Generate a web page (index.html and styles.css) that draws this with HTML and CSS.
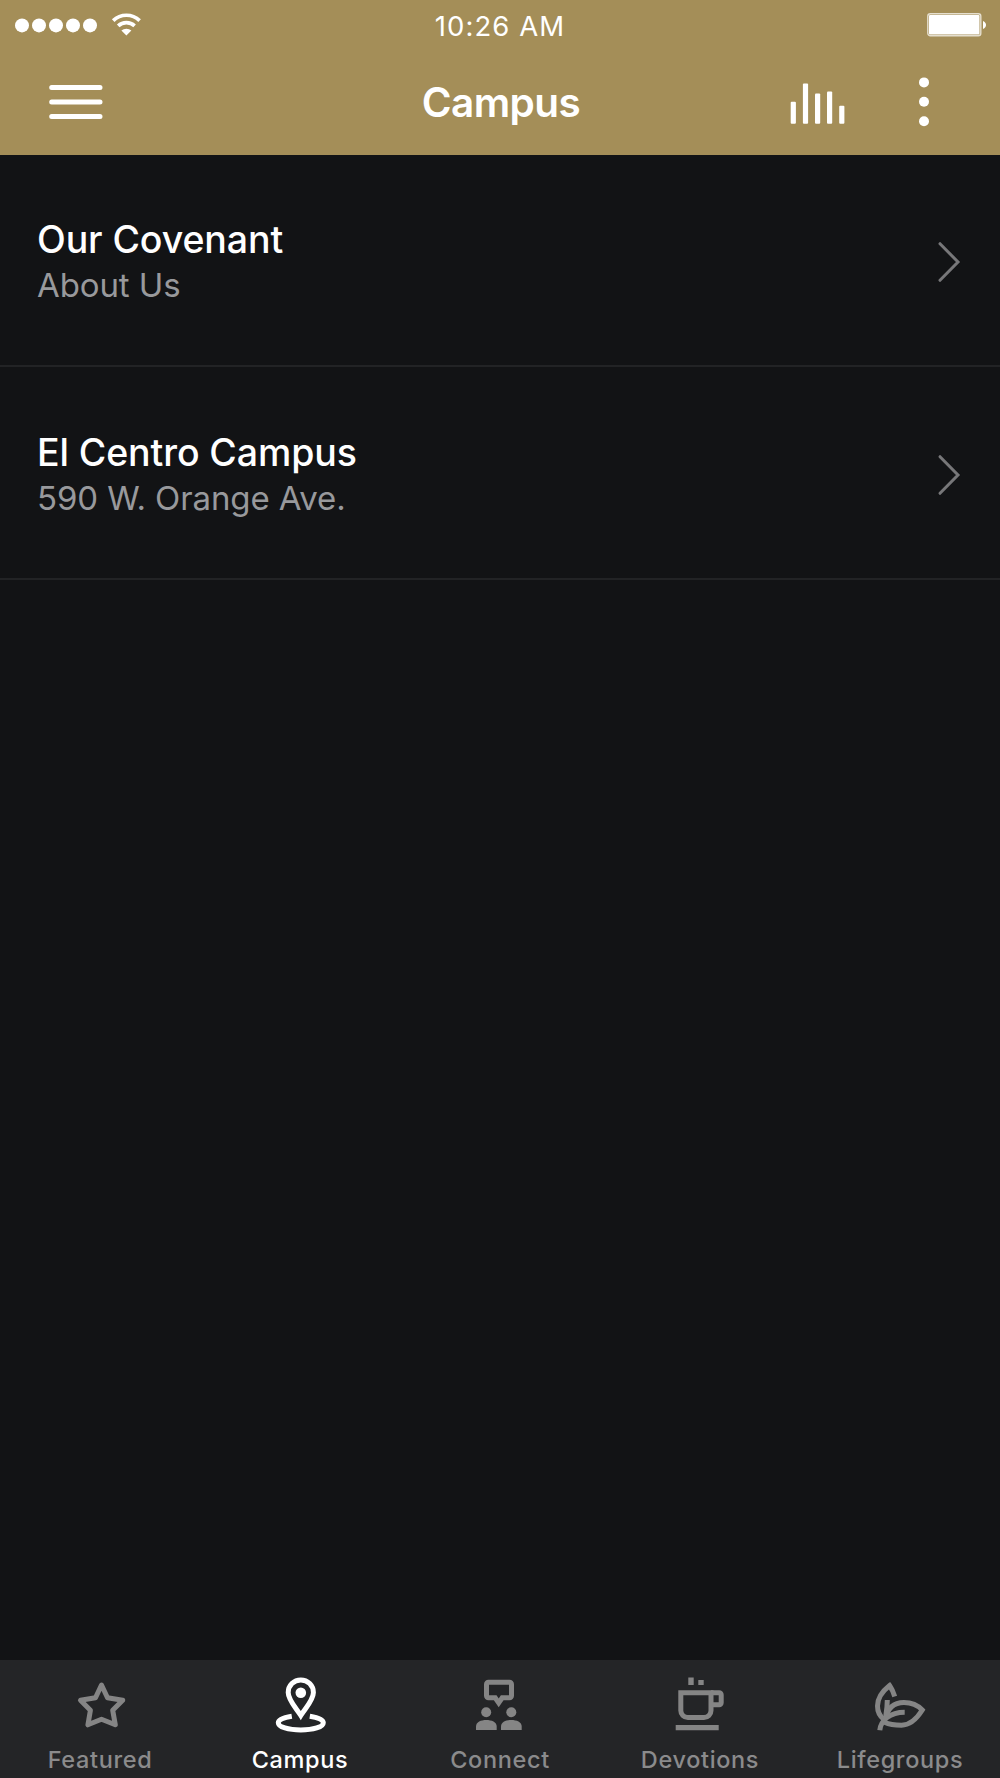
FILE: index.html
```html
<!DOCTYPE html>
<html lang="en">
<head>
  <meta charset="UTF-8">
  <title>Campus</title>
  <link rel="stylesheet" href="styles.css">
</head>
<body>

<header class="header">
  <div class="status">
    <svg class="signal" width="142" height="50" viewBox="0 0 142 50" fill="#fff">
      <circle cx="22" cy="25.4" r="7"/>
      <circle cx="39" cy="25.4" r="7"/>
      <circle cx="56" cy="25.4" r="7"/>
      <circle cx="73" cy="25.4" r="7"/>
      <circle cx="90" cy="25.4" r="7"/>
      <g fill="none" stroke="#fff" stroke-width="3.7">
        <path d="M113.2 20.6a19 19 0 0 1 26.4 0"/>
        <path d="M118.2 25.8a12 12 0 0 1 16.4 0"/>
      </g>
      <path d="M121.4 30.6a7.4 7.4 0 0 1 10 0L126.4 35.4z"/>
    </svg>
    <div class="time">10:26 AM</div>
    <svg class="battery" width="60" height="50" viewBox="0 0 60 50">
      <rect x="1.8" y="13.8" width="53" height="22" rx="2.5" fill="none" stroke="#e5dfcf" stroke-width="1.4"/>
      <rect x="3" y="15" width="50.5" height="19.5" rx="1" fill="#fff"/>
      <path d="M57 21c4 1.5 4 6.5 0 8z" fill="#fff"/>
    </svg>
  </div>
  <div class="nav">
    <svg class="menu" width="56" height="40" viewBox="0 0 56 40" stroke="#fff" stroke-width="5" stroke-linecap="round">
      <path d="M3.7 5.4H52M3.7 19.9H52M3.7 34.4H52"/>
    </svg>
    <h1 class="title">Campus</h1>
    <div class="actions">
      <svg width="56" height="50" viewBox="0 0 56 50" fill="#fff">
        <rect x=".7" y="24.8" width="5.2" height="22" rx="1"/>
        <rect x="12.9" y="6.5" width="5.2" height="40.3" rx="1"/>
        <rect x="25" y="16.5" width="5.2" height="30.3" rx="1"/>
        <rect x="37" y="14.5" width="5.2" height="32.3" rx="1"/>
        <rect x="49.2" y="28.8" width="5.2" height="18" rx="1"/>
      </svg>
      <svg width="12" height="50" viewBox="0 0 12 50" fill="#fff">
        <circle cx="6" cy="5.4" r="5"/>
        <circle cx="6" cy="24.8" r="5"/>
        <circle cx="6" cy="44.2" r="5"/>
      </svg>
    </div>
  </div>
</header>

<main class="list">
  <a class="row">
    <div>
      <div class="name">Our Covenant</div>
      <div class="sub">About Us</div>
    </div>
    <svg class="chevron" width="24" height="42" viewBox="0 0 24 42"><path d="M3 2.7 21 21 3 39.3"/></svg>
  </a>
  <a class="row">
    <div>
      <div class="name">El Centro Campus</div>
      <div class="sub">590 W. Orange Ave.</div>
    </div>
    <svg class="chevron" width="24" height="42" viewBox="0 0 24 42"><path d="M3 2.7 21 21 3 39.3"/></svg>
  </a>
</main>

<nav class="tabs">
  <a class="tab">
    <svg class="icon" viewBox="0 0 60 70">
      <path stroke-linejoin="round" d="M31.5 15 37.5 27.8 52.7 30.3 42.7 40.3 45.3 54.8 31.5 49.3 17.9 54.8 20.4 40.3 10.5 30.3 25.5 27.8z"/>
    </svg>
    <span>Featured</span>
  </a>
  <a class="tab active">
    <svg class="icon" viewBox="0 0 60 70">
      <path d="M30.8 45.5C26 38 18.2 30 18.2 22.5a12.6 12.6 0 0 1 25.2 0C43.4 30 35.6 38 30.8 45.5z"/>
      <circle class="solid" cx="30.8" cy="22.7" r="5.3"/>
      <path d="M21.8 46.2C14 47.5 8.3 49.7 8.3 52.7 8.3 57 18.4 60 30.8 60S53.3 57 53.3 52.7C53.3 49.7 47.6 47.5 39.8 46.2"/>
    </svg>
    <span>Campus</span>
  </a>
  <a class="tab">
    <svg class="icon" viewBox="0 0 60 70">
      <path d="M18.5 12.2H39.5a2 2 0 0 1 2 2V25.8a2 2 0 0 1-2 2H32.2L28.7 32.9 25.2 27.8H18.5a2 2 0 0 1-2-2V14.2a2 2 0 0 1 2-2z"/>
      <g class="solid">
        <circle cx="16.2" cy="42.3" r="5"/>
        <circle cx="41.3" cy="42.3" r="5"/>
        <path d="M6 60V56.5C6 52 11 50 16.3 50S26.7 52 26.7 56.5V60z"/>
        <path d="M31 60V56.5C31 52 36 50 41.3 50S51.7 52 51.7 56.5V60z"/>
      </g>
    </svg>
    <span>Connect</span>
  </a>
  <a class="tab">
    <svg class="icon" viewBox="0 0 60 70">
      <path d="M10.8 22.7H41V40.5a7 7 0 0 1-7 7H17.8a7 7 0 0 1-7-7z"/>
      <path d="M41 22.7H49.2a2 2 0 0 1 2 2V32.8a2 2 0 0 1-2 2H41"/>
      <path class="solid" d="M18.3 7.5h5.4V15h-5.4zM28.3 10h5.4v5h-5.4zM5.7 55H48.7v5.3H5.7z"/>
    </svg>
    <span>Devotions</span>
  </a>
  <a class="tab">
    <svg class="icon" viewBox="0 0 60 70">
      <path d="M24.7 26.5C23.5 22.5 21.7 18.5 19.6 15.5 12 21.5 7.5 28 7.5 36 7.5 42 9.5 46 14 49.5"/>
      <path d="M15.5 49.5C17.5 37.5 24 32.5 34 32.5 43 32.5 48.5 36 52.3 40 46 50 40 55.2 31.5 55.2 25 55.2 19.5 54.5 14.5 52.2"/>
      <path d="M9.8 60.3C10.5 50.5 20 42.3 34.7 42.3M17.3 30C17.3 36 16.8 40 15.8 46"/>
    </svg>
    <span>Lifegroups</span>
  </a>
</nav>

</body>
</html>
```
FILE: styles.css
```css
* {margin:0;padding:0;box-sizing:border-box;}
body {
  height: 1778px;
  display: flex;
  flex-direction: column;
  background: #121315;
  color: #fff;
  font-family: Inter, "Liberation Sans", sans-serif;
}
svg { display: block; }

.header {
  height: 154.5px;
  background: #a48e58;
}
.status, .nav {
  display: grid;
  grid-template-columns: 1fr auto 1fr;
  align-items: center;
}
.status { height: 50px; }
.time {
  padding-top: 2px;
  font-size: 27.5px;
  line-height: 48px;
  letter-spacing: 1.1px;
}
.battery { justify-self: end; margin-right: 14px; }
.nav {
  height: 103px;
  padding: 0 70px 0 48px;
}
.title {
  padding: 2px 0 0 24px;
  font-size: 40.5px;
  font-weight: 600;
  line-height: 101px;
  letter-spacing: -0.6px;
}
.actions {
  display: flex;
  justify-content: flex-end;
  gap: 72px;
}

.list { flex: 1; }
.row {
  height: 212.5px;
  padding: 5px 39px 0 37px;
  display: flex;
  justify-content: space-between;
  align-items: center;
  border-bottom: 2px solid #222325;
}
.name {
  font-size: 37.5px;
  font-weight: 500;
  line-height: 46px;
  letter-spacing: -0.1px;
}
.sub {
  font-size: 33px;
  line-height: 44px;
  letter-spacing: -0.1px;
  color: #98999c;
}
.chevron {
  fill: none;
  stroke: #777779;
  stroke-width: 3;
  stroke-linecap: round;
}

.tabs {
  height: 118px;
  padding-top: 10px;
  display: grid;
  grid-template-columns: repeat(5, 1fr);
  background: #242527;
}
.tab {
  display: flex;
  flex-direction: column;
  align-items: center;
  color: #8b8b8c;
  font-size: 23.5px;
  font-weight: 500;
  line-height: 40px;
  letter-spacing: 0.65px;
}
.icon {
  width: 60px;
  height: 70px;
  fill: none;
  stroke: #858585;
  stroke-width: 5;
}
.solid { fill: #858585; stroke: none; }
.active { color: #fff; }
.active .icon { stroke: #fff; }
.active .solid { fill: #fff; }
```
